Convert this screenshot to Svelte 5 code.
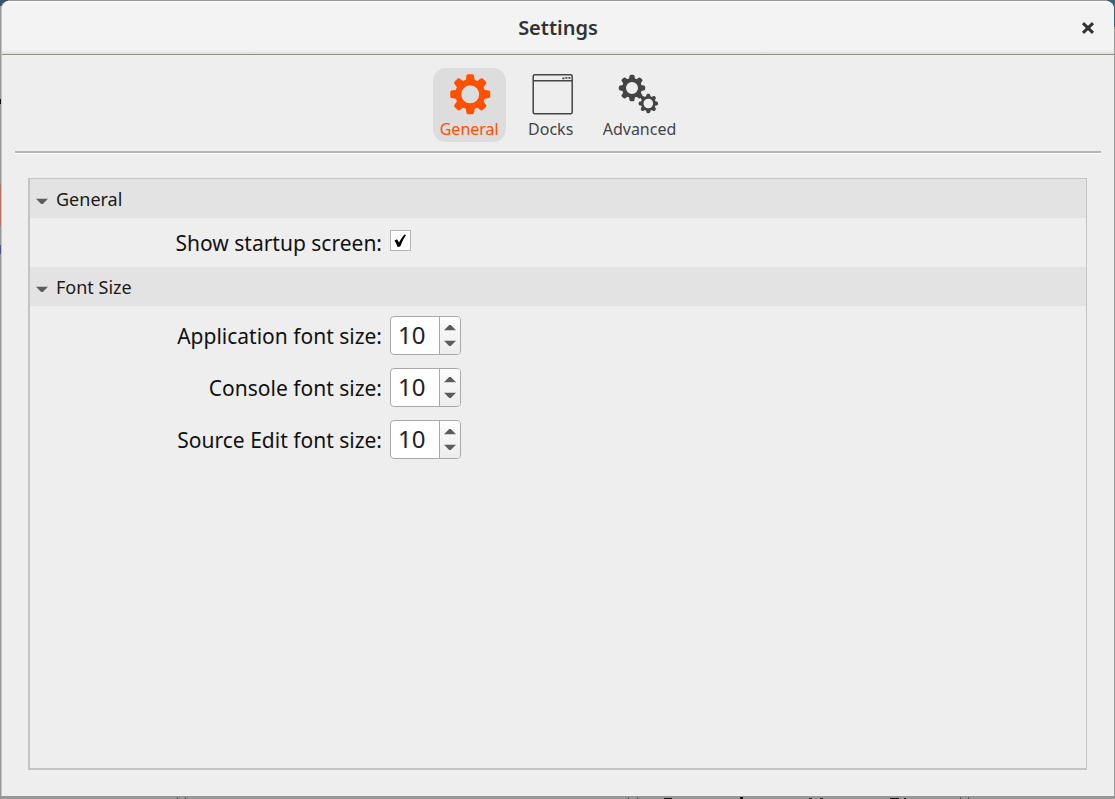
<script>
  let tab = $state('General');
  let startup = $state(true);
  let openGeneral = $state(true);
  let openFonts = $state(true);
  let sizes = $state([
    { id: 'app-size', label: 'Application font size:', value: 10 },
    { id: 'console-size', label: 'Console font size:', value: 10 },
    { id: 'source-size', label: 'Source Edit font size:', value: 10 }
  ]);
  const teeth = [0, 45, 90, 135, 180, 225, 270, 315];
</script>

{#snippet gear(cx, cy, outer, body, hole, w)}
  <g transform="translate({cx} {cy})">
    <circle r={(body + hole) / 2} fill="none" stroke="currentColor" stroke-width={body - hole} />
    {#each teeth as a}
      <path
        transform="rotate({a})"
        fill="currentColor"
        d="M{-w * 0.62} {-body + 1.6}L{-w / 2} {-outer + 1.3}Q{-w / 2 + 0.3} {-outer} {-w / 2 + 1.5} {-outer}H{w / 2 - 1.5}Q{w / 2 - 0.3} {-outer} {w / 2} {-outer + 1.3}L{w * 0.62} {-body + 1.6}Z"
      />
    {/each}
  </g>
{/snippet}

{#snippet arrow()}
  <svg class="arrow" viewBox="0 0 12 7" aria-hidden="true"><path d="M0 0.8H12L6.8 6H5.2Z" fill="#5c5c5c" /></svg>
{/snippet}

<div class="desktop">
  <main class="window">
    <header>
      <h1>Settings</h1>
      <button class="close" aria-label="Close">
        <svg viewBox="0 0 14 14"><path d="M2 2.2L12 11.8M12 2.2L2 11.8" stroke="#2e3436" stroke-width="3" /></svg>
      </button>
    </header>

    <nav>
      <button class="tab" class:active={tab === 'General'} onclick={() => (tab = 'General')}>
        <svg viewBox="0 0 44 44" aria-hidden="true">{@render gear(23.2, 22.3, 20, 15, 9, 7.4)}</svg>
        <span>General</span>
      </button>
      <button class="tab" class:active={tab === 'Docks'} onclick={() => (tab = 'Docks')}>
        <svg viewBox="0 0 44 44" aria-hidden="true">
          <rect x="4.2" y="2.7" width="39" height="39" rx="1.5" fill="none" stroke="currentColor" stroke-width="1.5" />
          <path d="M4.4 8.7H43" stroke="currentColor" stroke-width="1.4" />
          <path d="M33.4 6.3h2M36.4 5.8h2M39.4 5.8h2" stroke="currentColor" stroke-width="1.7" />
        </svg>
        <span>Docks</span>
      </button>
      <button class="tab" class:active={tab === 'Advanced'} onclick={() => (tab = 'Advanced')}>
        <svg viewBox="0 0 44 44" aria-hidden="true">
          {@render gear(15, 16, 13.2, 10, 6, 5)}
          {@render gear(31.3, 31.5, 9.7, 7.4, 4.8, 3.8)}
        </svg>
        <span>Advanced</span>
      </button>
    </nav>

    <div class="panel">
      <section>
        <button class="heading" onclick={() => (openGeneral = !openGeneral)}>{@render arrow()}General</button>
        {#if openGeneral}
          <div class="fields general">
            <div class="row">
              <label for="startup">Show startup screen:</label>
              <input id="startup" type="checkbox" bind:checked={startup} />
            </div>
          </div>
        {/if}
      </section>
      <section>
        <button class="heading" onclick={() => (openFonts = !openFonts)}>{@render arrow()}Font Size</button>
        {#if openFonts}
          <div class="fields">
            {#each sizes as s}
              <div class="row">
                <label for={s.id}>{s.label}</label>
                <div class="spin">
                  <input id={s.id} type="number" bind:value={s.value} />
                  <div class="steps">
                    <button class="up" aria-label="Increase" onclick={() => s.value++}>{@render arrow()}</button>
                    <button aria-label="Decrease" onclick={() => s.value--}>{@render arrow()}</button>
                  </div>
                </div>
              </div>
            {/each}
          </div>
        {/if}
      </section>
    </div>
  </main>
</div>

<style>
  :global(body) {
    margin: 0;
  }
  .desktop,
  .desktop * {
    box-sizing: border-box;
  }
  .desktop {
    min-height: 100vh;
    display: flex;
    padding: 1px 1px 3px;
    font-family: 'Noto Sans', 'Open Sans', sans-serif;
    color: #1a1a1a;
    background:
      linear-gradient(#35566b, #35566b) 0 0 / 8px 6px no-repeat,
      linear-gradient(#35647a, #35647a) 100% 0 / 8px 27px no-repeat,
      linear-gradient(#111, #111) 0 99px / 1px 5px no-repeat,
      linear-gradient(#b0765f, #b0765f) 0 184px / 1px 42px no-repeat,
      linear-gradient(#465b8c, #465b8c) 0 245px / 1px 9px no-repeat,
      linear-gradient(#111, #111) 664px 100% / 8px 1px no-repeat,
      linear-gradient(#111, #111) 740px 100% / 3px 2px no-repeat,
      linear-gradient(#222, #222) 809px 100% / 3px 1px no-repeat,
      linear-gradient(#222, #222) 820px 100% / 3px 1px no-repeat,
      linear-gradient(#111, #111) 890px 100% / 9px 1px no-repeat,
      linear-gradient(#111, #111) 904px 100% / 2px 1px no-repeat,
      linear-gradient(#555, #555) 177px 100% / 1px 2px no-repeat,
      linear-gradient(#555, #555) 185px 100% / 1px 2px no-repeat,
      linear-gradient(#555, #555) 628px 100% / 1px 2px no-repeat,
      linear-gradient(#555, #555) 637px 100% / 1px 2px no-repeat,
      linear-gradient(#555, #555) 960px 100% / 1px 2px no-repeat,
      linear-gradient(#555, #555) 968px 100% / 1px 2px no-repeat,
      #989898;
  }
  .window {
    flex: 1;
    display: flex;
    flex-direction: column;
    background: #eee;
    border-radius: 8px 8px 0 0;
    border-left: 1px solid #c4c4c4;
    overflow: hidden;
  }
  button {
    font: inherit;
    color: inherit;
    border: 0;
    padding: 0;
    background: none;
  }
  svg {
    display: block;
  }
  header {
    display: grid;
    grid-template-columns: 1fr auto 1fr;
    align-items: center;
    height: 54px;
    background: linear-gradient(#fff 0, #f3f3f3 2px, #f3f3f3 49px, #dededa 53px);
    border-bottom: 1px solid #8f8f86;
    color: #2e3436;
  }
  h1 {
    grid-column: 2;
    margin: 0;
    font-size: 20px;
    line-height: 28px;
    font-weight: 600;
  }
  .close {
    justify-self: end;
    margin-right: 19px;
  }
  .close svg {
    width: 14px;
    height: 14px;
  }
  nav {
    display: flex;
    justify-content: center;
    gap: 15px;
    margin: 0 13px;
    padding: 13px 0 9px;
    border-bottom: 2px solid #b4b4b4;
    box-shadow: 0 1px #fff;
  }
  .tab {
    display: flex;
    flex-direction: column;
    align-items: center;
    min-width: 60px;
    height: 74px;
    padding: 4px 7px 0;
    border-radius: 13px;
    font-size: 16px;
    line-height: 26px;
    color: #444;
  }
  .tab svg {
    width: 44px;
    height: 44px;
  }
  .tab.active {
    background: #ddd;
    color: #ff5000;
  }
  .panel {
    flex: 1;
    margin: 25px 27px 26px 26px;
    border: 2px solid #c4c4c4;
    border-width: 1px 1px 2px 2px;
  }
  .heading {
    display: flex;
    align-items: center;
    gap: 8px;
    width: 100%;
    height: 39px;
    padding-left: 6px;
    background: #e3e3e3;
    font-size: 18px;
    line-height: 24px;
    text-align: left;
  }
  .heading .arrow {
    margin-top: 5px;
  }
  .arrow {
    width: 12px;
    height: 7px;
  }
  .fields {
    display: grid;
    gap: 13px;
    padding: 10px 0;
  }
  .fields.general {
    padding: 10px 0 9px;
  }
  .row {
    display: grid;
    grid-template-columns: 352px auto;
    gap: 8px;
    align-items: center;
    justify-content: start;
  }
  label {
    text-align: right;
    font-size: 21px;
    line-height: 30px;
    color: #111;
  }
  input {
    font: inherit;
    margin: 0;
  }
  input[type='checkbox'] {
    appearance: none;
    width: 21px;
    height: 21px;
    margin-bottom: 5px;
    border: 1px solid #b4b4b4;
    background: #fff;
  }
  input[type='checkbox']:checked {
    background: #fff
      url("data:image/svg+xml,%3Csvg xmlns='http://www.w3.org/2000/svg' viewBox='0 0 19 19'%3E%3Cpath d='M3.5 9.5 6 8.3 8 11.5Q10.5 6.5 13.5 3.5L15 4Q11.5 9 9.2 15.5L6.5 16Q5.5 12.5 3.5 9.5Z'/%3E%3C/svg%3E");
  }
  .spin {
    display: flex;
    width: 71px;
    height: 39px;
    border: 1px solid #a9a9a9;
    border-radius: 4px;
    background: #fff;
    overflow: hidden;
  }
  .spin input {
    appearance: textfield;
    flex: 1;
    min-width: 0;
    border: 0;
    padding: 0 0 2px 7px;
    font-size: 24px;
    background: none;
    color: #222;
  }
  .spin input::-webkit-inner-spin-button {
    appearance: none;
    margin: 0;
  }
  .steps {
    width: 21px;
    display: grid;
    gap: 9px;
    align-content: center;
    justify-items: center;
    border-left: 1px solid #a9a9a9;
    background: linear-gradient(#fdfdfd, #ececec);
  }
  .up {
    transform: rotate(180deg);
  }
</style>
